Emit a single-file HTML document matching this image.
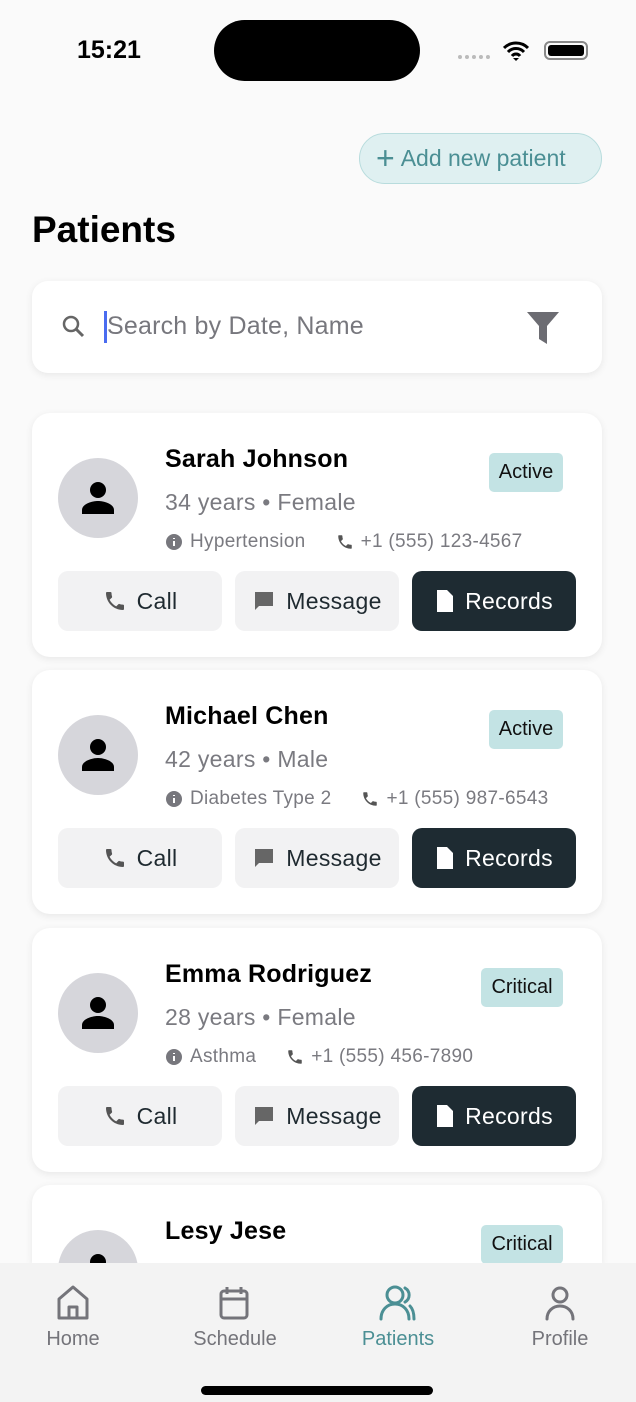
<!DOCTYPE html>
<html><head><meta charset="utf-8"><style>
*{box-sizing:border-box;margin:0;padding:0}
html,body{width:636px;height:1402px;overflow:hidden}
body{background:#fafafa;font-family:"Liberation Sans",sans-serif;position:relative}
.a{position:absolute}
.card{position:absolute;left:32px;width:570px;height:244px;background:#fff;border-radius:18px;box-shadow:0 2px 8px rgba(0,0,0,.08);overflow:hidden}
.av{position:absolute;left:26px;top:45px;width:80px;height:80px;border-radius:50%;background:#d6d6db}
.av svg{position:absolute;left:20px;top:20px}
.nm{position:absolute;left:133px;top:32px;font-size:25px;font-weight:bold;color:#000;letter-spacing:.2px}
.sub{position:absolute;left:133px;top:76px;font-size:23px;color:#7a7a80;letter-spacing:.3px}
.inf{position:absolute;left:133px;top:118px;font-size:19px;color:#7a7a80;display:flex;align-items:center;white-space:nowrap;letter-spacing:.3px}
.inf svg{margin-right:7px}
.badge{position:absolute;top:40px;height:39px;background:#c3e3e4;border-radius:5px;font-size:20px;color:#111;line-height:39px;text-align:center}
.btn{position:absolute;top:158px;width:164px;height:60px;border-radius:10px;background:#f2f2f3;display:flex;align-items:center;justify-content:center;font-size:23px;color:#1f2a30;letter-spacing:.3px}
.btn svg{margin-right:10px}
.dark{background:#1e2b32;color:#fff}
.tab{position:absolute;top:1284px;width:120px;text-align:center;font-size:20px;color:#74747a}
.tab svg{display:block;margin:0 auto 6px}
</style></head><body>
<div class="a" style="left:77px;top:36px;font-size:25px;font-weight:bold;color:#000">15:21</div>
<div class="a" style="left:214px;top:20px;width:206px;height:61px;border-radius:31px;background:#000"></div>
<div class="a" style="left:458px;top:55px;width:32px;height:4px;border-top:4px dotted #bbb"></div>
<svg class="a" style="left:503px;top:40px" width="26" height="22" viewBox="0 0 26 22"><path d="M1 8a17 17 0 0 1 24 0M5 12a11 11 0 0 1 16 0M9 16a5 5 0 0 1 8 0" stroke="#000" stroke-width="3" fill="none"/><path d="M13 21l-3-3h6z"/></svg>
<div class="a" style="left:544px;top:41px;width:44px;height:19px;border:2px solid #888;border-radius:6px;padding:2px"><div style="width:100%;height:100%;background:#000;border-radius:3px"></div></div>
<div class="a" style="left:359px;top:133px;width:243px;height:51px;border-radius:26px;background:#dff0f1;border:1.5px solid #b8dcdd;color:#4b8f94;font-size:23px;line-height:48px;padding-left:16px;white-space:nowrap"><span style="font-size:32px;vertical-align:-3px;margin-right:6px">+</span>Add new patient</div>
<div class="a" style="left:32px;top:209px;font-size:37px;font-weight:bold;color:#000">Patients</div>
<div class="a" style="left:32px;top:281px;width:570px;height:92px;background:#fff;border-radius:16px;box-shadow:0 2px 8px rgba(0,0,0,.08)">
<svg class="a" style="left:29px;top:33px" width="26" height="26" viewBox="0 0 26 26"><circle cx="10" cy="10" r="7" stroke="#666" stroke-width="2.5" fill="none"/><path d="M15 15l7 7" stroke="#666" stroke-width="3"/></svg>
<div class="a" style="left:72px;top:30px;width:3px;height:32px;background:#4a6cf0"></div>
<div class="a" style="left:75px;top:31px;font-size:25px;color:#77777d;letter-spacing:.2px">Search by Date, Name</div>
<svg class="a" style="left:494px;top:30px" width="34" height="34" viewBox="0 0 34 34"><path d="M1 1h32L21 15v18l-8-5V15z" fill="#6c6c72"/></svg>
</div>

<div class="card" style="top:413px">
<div class="av"><svg width="40" height="40" viewBox="0 0 40 40"><circle cx="20" cy="12" r="8"/><path d="M4 36v-4c0-6 10-9 16-9s16 3 16 9v4z"/></svg></div>
<div class="nm">Sarah Johnson</div><div class="badge" style="left:457px;width:74px">Active</div>
<div class="sub">34 years • Female</div>
<div class="inf"><svg width="18" height="18" viewBox="0 0 18 18"><circle cx="9" cy="9" r="8" fill="#77777d"/><path d="M9 8v5M9 5v1" stroke="#fff" stroke-width="2"/></svg>Hypertension<span style="width:30px"></span><svg width="18" height="18" viewBox="0 0 24 24"><path fill="#555" d="M6.6 10.8c1.4 2.8 3.8 5.1 6.6 6.6l2.2-2.2c.3-.3.7-.4 1-.2 1.1.4 2.3.6 3.6.6.6 0 1 .4 1 1V20c0 .6-.4 1-1 1C10.6 21 3 13.4 3 4c0-.6.4-1 1-1h3.5c.6 0 1 .4 1 1 0 1.3.2 2.5.6 3.6.1.3 0 .7-.2 1z"/></svg>+1 (555) 123-4567</div>
<div class="btn" style="left:26px"><svg width="24" height="24" viewBox="0 0 24 24"><path fill="#555" d="M6.6 10.8c1.4 2.8 3.8 5.1 6.6 6.6l2.2-2.2c.3-.3.7-.4 1-.2 1.1.4 2.3.6 3.6.6.6 0 1 .4 1 1V20c0 .6-.4 1-1 1C10.6 21 3 13.4 3 4c0-.6.4-1 1-1h3.5c.6 0 1 .4 1 1 0 1.3.2 2.5.6 3.6.1.3 0 .7-.2 1z"/></svg>Call</div>
<div class="btn" style="left:203px"><svg width="24" height="24" viewBox="0 0 24 24"><path fill="#666" d="M3 3h18v14H7l-4 4zM6 7h12v1.5H6zm0 3h12v1.5H6zm0 3h8v1.5H6z"/></svg>Message</div>
<div class="btn dark" style="left:380px"><svg width="20" height="24" viewBox="0 0 20 24"><path fill="#fff" d="M2 1h10l6 6v16H2z"/></svg>Records</div>
</div>

<div class="card" style="top:670px">
<div class="av"><svg width="40" height="40" viewBox="0 0 40 40"><circle cx="20" cy="12" r="8"/><path d="M4 36v-4c0-6 10-9 16-9s16 3 16 9v4z"/></svg></div>
<div class="nm">Michael Chen</div><div class="badge" style="left:457px;width:74px">Active</div>
<div class="sub">42 years • Male</div>
<div class="inf"><svg width="18" height="18" viewBox="0 0 18 18"><circle cx="9" cy="9" r="8" fill="#77777d"/><path d="M9 8v5M9 5v1" stroke="#fff" stroke-width="2"/></svg>Diabetes Type 2<span style="width:30px"></span><svg width="18" height="18" viewBox="0 0 24 24"><path fill="#555" d="M6.6 10.8c1.4 2.8 3.8 5.1 6.6 6.6l2.2-2.2c.3-.3.7-.4 1-.2 1.1.4 2.3.6 3.6.6.6 0 1 .4 1 1V20c0 .6-.4 1-1 1C10.6 21 3 13.4 3 4c0-.6.4-1 1-1h3.5c.6 0 1 .4 1 1 0 1.3.2 2.5.6 3.6.1.3 0 .7-.2 1z"/></svg>+1 (555) 987-6543</div>
<div class="btn" style="left:26px"><svg width="24" height="24" viewBox="0 0 24 24"><path fill="#555" d="M6.6 10.8c1.4 2.8 3.8 5.1 6.6 6.6l2.2-2.2c.3-.3.7-.4 1-.2 1.1.4 2.3.6 3.6.6.6 0 1 .4 1 1V20c0 .6-.4 1-1 1C10.6 21 3 13.4 3 4c0-.6.4-1 1-1h3.5c.6 0 1 .4 1 1 0 1.3.2 2.5.6 3.6.1.3 0 .7-.2 1z"/></svg>Call</div>
<div class="btn" style="left:203px"><svg width="24" height="24" viewBox="0 0 24 24"><path fill="#666" d="M3 3h18v14H7l-4 4zM6 7h12v1.5H6zm0 3h12v1.5H6zm0 3h8v1.5H6z"/></svg>Message</div>
<div class="btn dark" style="left:380px"><svg width="20" height="24" viewBox="0 0 20 24"><path fill="#fff" d="M2 1h10l6 6v16H2z"/></svg>Records</div>
</div>

<div class="card" style="top:928px">
<div class="av"><svg width="40" height="40" viewBox="0 0 40 40"><circle cx="20" cy="12" r="8"/><path d="M4 36v-4c0-6 10-9 16-9s16 3 16 9v4z"/></svg></div>
<div class="nm">Emma Rodriguez</div><div class="badge" style="left:449px;width:82px">Critical</div>
<div class="sub">28 years • Female</div>
<div class="inf"><svg width="18" height="18" viewBox="0 0 18 18"><circle cx="9" cy="9" r="8" fill="#77777d"/><path d="M9 8v5M9 5v1" stroke="#fff" stroke-width="2"/></svg>Asthma<span style="width:30px"></span><svg width="18" height="18" viewBox="0 0 24 24"><path fill="#555" d="M6.6 10.8c1.4 2.8 3.8 5.1 6.6 6.6l2.2-2.2c.3-.3.7-.4 1-.2 1.1.4 2.3.6 3.6.6.6 0 1 .4 1 1V20c0 .6-.4 1-1 1C10.6 21 3 13.4 3 4c0-.6.4-1 1-1h3.5c.6 0 1 .4 1 1 0 1.3.2 2.5.6 3.6.1.3 0 .7-.2 1z"/></svg>+1 (555) 456-7890</div>
<div class="btn" style="left:26px"><svg width="24" height="24" viewBox="0 0 24 24"><path fill="#555" d="M6.6 10.8c1.4 2.8 3.8 5.1 6.6 6.6l2.2-2.2c.3-.3.7-.4 1-.2 1.1.4 2.3.6 3.6.6.6 0 1 .4 1 1V20c0 .6-.4 1-1 1C10.6 21 3 13.4 3 4c0-.6.4-1 1-1h3.5c.6 0 1 .4 1 1 0 1.3.2 2.5.6 3.6.1.3 0 .7-.2 1z"/></svg>Call</div>
<div class="btn" style="left:203px"><svg width="24" height="24" viewBox="0 0 24 24"><path fill="#666" d="M3 3h18v14H7l-4 4zM6 7h12v1.5H6zm0 3h12v1.5H6zm0 3h8v1.5H6z"/></svg>Message</div>
<div class="btn dark" style="left:380px"><svg width="20" height="24" viewBox="0 0 20 24"><path fill="#fff" d="M2 1h10l6 6v16H2z"/></svg>Records</div>
</div>

<div class="card" style="top:1185px;height:78px;border-radius:18px 18px 0 0">
<div class="av"><svg width="40" height="40" viewBox="0 0 40 40"><circle cx="20" cy="12" r="8"/><path d="M4 36v-4c0-6 10-9 16-9s16 3 16 9v4z"/></svg></div>
<div class="nm">Lesy Jese</div><div class="badge" style="left:449px;width:82px">Critical</div>
</div>

<div class="a" style="left:0;top:1263px;width:636px;height:139px;background:#f3f3f3"></div>
<div class="tab" style="left:13px"><svg width="38" height="38" viewBox="0 0 38 38"><path d="M5 34V15L19 3l14 12v19zM15 34V23h8v11" stroke="#74747a" stroke-width="3" fill="none" stroke-linejoin="round"/></svg>Home</div>
<div class="tab" style="left:175px"><svg width="38" height="38" viewBox="0 0 38 38"><rect x="5" y="7" width="26" height="27" rx="3" stroke="#74747a" stroke-width="3" fill="none"/><path d="M5 15h26M11 3v7M25 3v7" stroke="#74747a" stroke-width="3"/></svg>Schedule</div>
<div class="tab" style="left:338px;color:#4b8f94"><svg width="38" height="38" viewBox="0 0 38 38"><circle cx="16" cy="11" r="8" stroke="#4b8f94" stroke-width="3" fill="none"/><path d="M2 35c0-9 6-15 14-15s14 6 14 15M26 4a8 8 0 0 1 0 14M31 22c3 3 4 8 4 13" stroke="#4b8f94" stroke-width="3" fill="none" stroke-linecap="round"/></svg>Patients</div>
<div class="tab" style="left:500px"><svg width="38" height="38" viewBox="0 0 38 38"><circle cx="19" cy="11" r="7" stroke="#74747a" stroke-width="3" fill="none"/><path d="M6 35c0-8 6-13 13-13s13 5 13 13" stroke="#74747a" stroke-width="3" fill="none" stroke-linecap="round"/></svg>Profile</div>
<div class="a" style="left:201px;top:1386px;width:232px;height:9px;border-radius:5px;background:#000"></div>
</body></html>
